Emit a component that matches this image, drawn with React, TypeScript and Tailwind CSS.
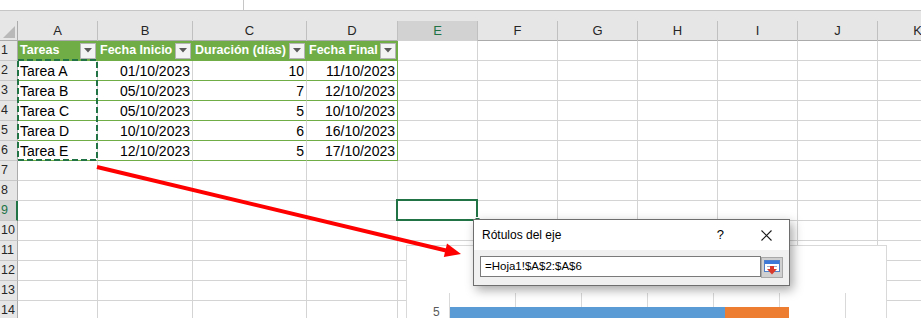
import React from 'react'

const letters = ['A', 'B', 'C', 'D', 'E', 'F', 'G', 'H', 'I', 'J', 'K']

const headers = ['Tareas', 'Fecha Inicio', 'Duración (días)', 'Fecha Final']

const tasks = [
  ['Tarea A', '01/10/2023', '10', '11/10/2023'],
  ['Tarea B', '05/10/2023', '7', '12/10/2023'],
  ['Tarea C', '05/10/2023', '5', '10/10/2023'],
  ['Tarea D', '10/10/2023', '6', '16/10/2023'],
  ['Tarea E', '12/10/2023', '5', '17/10/2023'],
]

const rowNumbers = Array.from({ length: 14 }, (_, i) => i + 1)

function FilterButton() {
  return (
    <span className="ml-auto mr-[1px] flex h-[16px] w-[16px] shrink-0 items-center justify-center border border-[#b4b4b4] bg-[#f3f3f3]">
      <svg width="8" height="5" viewBox="0 0 8 5">
        <polygon points="0,0 8,0 4,4.5" fill="#595959" />
      </svg>
    </span>
  )
}

function ColumnHeader({ label, selected }: { label: string; selected: boolean }) {
  return (
    <div
      className={
        selected
          ? 'flex h-[30px] flex-col border-b-2 border-[#217346] bg-[#e6e6e6]'
          : 'flex h-[30px] flex-col border-b border-[#ababab] bg-[#e6e6e6]'
      }
    >
      <div
        className={
          selected
            ? 'mt-[10px] flex flex-1 items-center justify-center border-r border-[#c0c0c0] bg-[#d2d2d2] text-[13px] text-[#217346]'
            : 'mt-[10px] flex flex-1 items-center justify-center border-r border-[#c0c0c0] text-[13px] text-[#262626]'
        }
      >
        {label}
      </div>
    </div>
  )
}

function Cell({ row, col }: { row: number; col: number }) {
  if (row === 1 && col < 4) {
    return (
      <div className="flex h-[20px] items-center border-r border-b border-[#70ad47] bg-[#70ad47] pl-[2px] text-[12.5px] font-bold text-white">
        <span className="whitespace-nowrap">{headers[col]}</span>
        <FilterButton />
      </div>
    )
  }
  if (row >= 2 && row <= 6 && col < 4) {
    const value = tasks[row - 2][col]
    return (
      <div
        className={
          col === 3
            ? 'h-[20px] border-r border-b border-[#70ad47] bg-white pr-[2px] pt-[1px] text-right text-[14px] leading-[18px]'
            : col === 0
              ? 'h-[20px] border-r border-b border-r-[#d4d4d4] border-b-[#70ad47] bg-white pl-[2px] pt-[1px] text-[14px] leading-[18px]'
              : 'h-[20px] border-r border-b border-r-[#d4d4d4] border-b-[#70ad47] bg-white pr-[2px] pt-[1px] text-right text-[14px] leading-[18px]'
        }
      >
        {value}
      </div>
    )
  }
  return <div className="h-[20px] border-r border-b border-[#d4d4d4] bg-white" />
}

export default function App() {
  return (
    <div className="relative h-[318px] w-[921px] overflow-hidden bg-white font-['Liberation_Sans',Arial,sans-serif] text-black">
      {/* formula bar strip */}
      <div className="flex h-[11px] border-b border-[#c6c6c6] bg-white">
        <div className="w-[243px]" />
        <div className="flex-1 border-l border-[#c6c6c6] bg-white" />
      </div>

      <div className="grid w-max grid-cols-[18px_80px_95px_114px_91px_80px_80px_80px_80px_80px_80px_80px]">
        {/* corner */}
        <div className="flex h-[30px] flex-col border-b border-[#ababab] bg-[#e6e6e6]">
          <div className="mt-[10px] flex flex-1 items-end justify-end border-r border-[#ababab] pr-[2px] pb-[2px]">
            <svg width="13" height="12" viewBox="0 0 13 12">
              <polygon points="13,0 13,12 1,12" fill="#b9b9b9" />
            </svg>
          </div>
        </div>
        {letters.map((l) => (
          <ColumnHeader key={l} label={l} selected={l === 'E'} />
        ))}

        {rowNumbers.map((r) => (
          <React.Fragment key={r}>
            <div
              className={
                r === 9
                  ? 'h-[20px] border-r-2 border-b border-r-[#217346] border-b-[#c8c8c8] bg-[#d2d2d2] pl-[1px] text-[12.5px] leading-[19px] text-[#217346]'
                  : 'h-[20px] border-r border-b border-r-[#ababab] border-b-[#c8c8c8] bg-[#e6e6e6] pl-[1px] text-[12.5px] leading-[19px] text-[#262626]'
              }
            >
              {r}
            </div>
            {letters.map((l, c) => (
              <Cell key={l} row={r} col={c} />
            ))}
          </React.Fragment>
        ))}
      </div>

      {/* chart object */}
      <div className="absolute top-[245px] left-[406px] h-[80px] w-[481px] border border-[#d9d9d9] bg-white">
        <svg width="479" height="78" className="block">
          {[42, 108, 174, 240, 306, 372, 438].map((x) => (
            <line key={x} x1={x + 0.5} y1={47} x2={x + 0.5} y2={78} stroke="#d9d9d9" />
          ))}
          <text x="26" y="70" fontSize="12" fill="#595959" fontFamily="Liberation Sans, Arial, sans-serif">
            5
          </text>
          <rect x="43" y="61" width="275" height="20" fill="#5b9bd5" />
          <rect x="318" y="61" width="64" height="20" fill="#ed7d31" />
        </svg>
      </div>

      {/* copy marquee, active cell, arrow */}
      <svg className="pointer-events-none absolute top-0 left-0" width="921" height="318">
        <rect x="18" y="60" width="79" height="100" fill="none" stroke="#217346" strokeWidth="2" strokeDasharray="6 3" />
        <rect x="397" y="200" width="80" height="20" fill="none" stroke="#217346" strokeWidth="2" />
        <rect x="475" y="217.5" width="5" height="5" fill="#217346" stroke="#ffffff" strokeWidth="1" />
        <line x1="97" y1="167" x2="446" y2="250.5" stroke="#ff0000" strokeWidth="4" />
        <polygon points="461,254 443.8,257.1 447,243.5" fill="#ff0000" />
      </svg>

      {/* dialog */}
      <div className="absolute top-[219px] left-[473px] flex h-[67px] w-[317px] flex-col border border-[#6e6e6e] bg-[#f0f0f0] shadow-[3px_4px_10px_rgba(0,0,0,0.35)]">
        <div className="flex h-[30px] items-center bg-white pr-[17px] pl-[8px]">
          <span className="flex-1 text-[12px]">Rótulos del eje</span>
          <span className="mr-[37px] text-[13px]">?</span>
          <svg width="11" height="11" viewBox="0 0 11 11">
            <path d="M0.5 0.5 L10.5 10.5 M10.5 0.5 L0.5 10.5" stroke="#1a1a1a" strokeWidth="1.1" />
          </svg>
        </div>
        <div className="flex items-start pt-[6px] pl-[6px]">
          <div className="flex h-[21px] w-[281px] items-center border border-[#7a7a7a] bg-white pl-[4px] text-[11.5px]">
            =Hoja1!$A$2:$A$6
          </div>
          <div className="mt-[1px] flex h-[21px] w-[22px] items-center justify-center border border-[#a8a8a8] bg-[#d0d0d0]">
            <svg width="16" height="15" viewBox="0 0 16 15">
              <rect x="0.5" y="0.5" width="15" height="11" fill="#ffffff" stroke="#4f7fc9" />
              <rect x="1" y="1" width="14" height="3" fill="#3b78d8" />
              <rect x="3" y="6" width="10" height="1" fill="#9ab0d0" />
              <rect x="6" y="6" width="4" height="4" fill="#d8392b" />
              <polygon points="3,9 13,9 8,14.5" fill="#d8392b" />
            </svg>
          </div>
        </div>
      </div>
    </div>
  )
}
